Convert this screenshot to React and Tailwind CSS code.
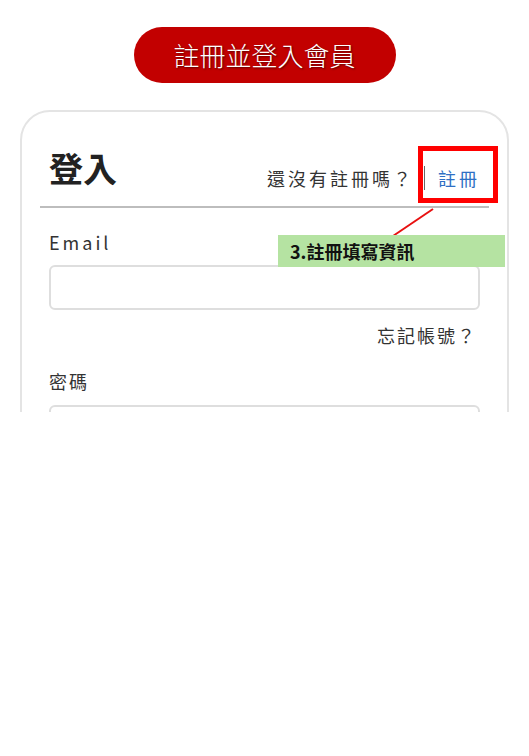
export default function App() {
  const font = { fontFamily: '"Noto Sans CJK TC", "Noto Sans", sans-serif' };
  return (
    <div className="min-h-[756px] w-[529px] bg-white" style={font}>
      <div className="relative h-[412px] overflow-hidden">
        {/* page title pill */}
        <div className="flex justify-center pt-[27px]">
          <div className="flex h-[56px] w-[262px] items-center justify-center rounded-full bg-[#c20000] text-[26px] font-light leading-none text-white [text-shadow:1px_1px_2px_rgba(0,0,0,0.55)]">
            註冊並登入會員
          </div>
        </div>

        {/* login card */}
        <div className="mx-[20px] mt-[27px] h-[400px] rounded-[30px] border-2 border-[#e4e4e4] px-[18px] pt-[39px]">
          <div className="flex items-end justify-between px-[9px] pb-[16px]">
            <h1 className="mb-[5px] text-[34px] font-bold leading-none text-[#222]">登入</h1>
            <div className="flex items-center text-[18px] leading-none tracking-[3px]">
              <span className="text-[#333]">還沒有註冊嗎？</span>
              <span className="ml-[10px] h-[24px] w-px bg-[#666]" />
              <a className="ml-[13px] text-[#2f6fc4]">註冊</a>
            </div>
          </div>
          <div className="h-[2px] bg-[#bdbdbd]" />

          <div className="px-[9px]">
            <label className="mt-[25px] block text-[18px] leading-none tracking-[3px] text-[#333]">Email</label>
            <input className="mt-[14px] block h-[45px] w-full rounded-[6px] border-2 border-[#dedede] outline-none" />
            <div className="mt-[16px] pr-[3px] text-right text-[18px] leading-none tracking-[2px] text-[#333]">忘記帳號？</div>
            <label className="mt-[28px] block text-[18px] leading-none tracking-[2px] text-[#333]">密碼</label>
            <input type="password" className="mt-[15px] block h-[45px] w-full rounded-[6px] border-2 border-[#dedede] outline-none" />
          </div>
        </div>

        {/* tutorial annotation */}
        <div className="absolute left-[418px] top-[146px] h-[57px] w-[80px] border-[5px] border-[#ff0000]" />
        <svg className="absolute left-0 top-0" width="529" height="412">
          <line x1="433" y1="209" x2="393" y2="236" stroke="#e81010" strokeWidth="2" />
        </svg>
        <div className="absolute left-[278px] top-[235px] flex h-[32px] w-[227px] items-center bg-[#b5e3a2] pl-[12px] text-[18px] font-bold leading-none text-[#111]">
          3.註冊填寫資訊
        </div>
      </div>
    </div>
  );
}
